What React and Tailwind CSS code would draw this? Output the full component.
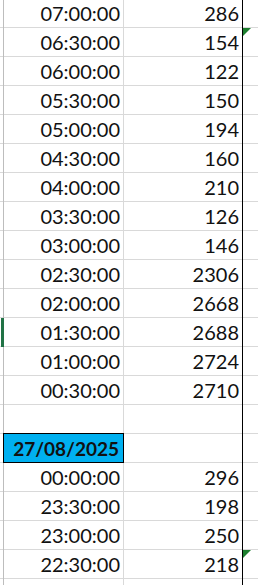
import React from "react";

const rows = [
  ["07:00:00", "286"],
  ["06:30:00", "154", "tri"],
  ["06:00:00", "122"],
  ["05:30:00", "150"],
  ["05:00:00", "194"],
  ["04:30:00", "160"],
  ["04:00:00", "210"],
  ["03:30:00", "126"],
  ["03:00:00", "146"],
  ["02:30:00", "2306"],
  ["02:00:00", "2668"],
  ["01:30:00", "2688", "sel"],
  ["01:00:00", "2724"],
  ["00:30:00", "2710"],
  ["", ""],
  ["27/08/2025", "", "date"],
  ["00:00:00", "296"],
  ["23:30:00", "198"],
  ["23:00:00", "250"],
  ["22:30:00", "218", "tri"],
  ["", ""],
];

function Tri() {
  return (
    <svg width="9" height="9" viewBox="0 0 9 9" className="block">
      <polygon points="0,0 8,0 0,8" fill="#1d7f2f" />
    </svg>
  );
}

export default function App() {
  return (
    <div
      className="w-[258px] h-[585px] overflow-hidden bg-white text-[#111]"
      style={{ fontFamily: "Lato, 'Open Sans', sans-serif" }}
    >
      <div className="flex -mt-px">
        {/* left stub column */}
        <div className="w-[4px] border-r border-[#bdbdbd] flex flex-col">
          {rows.map((r, i) => (
            <div key={i} className="h-[29px] border-b border-[#d9d9d9]">
              {r[2] === "sel" && (
                <div className="ml-px w-[3px] h-[29px] bg-[#217346]" />
              )}
            </div>
          ))}
        </div>
        {/* column A */}
        <div className="w-[120px] border-r border-[#d9d9d9] flex flex-col">
          {rows.map((r, i) =>
            r[2] === "date" ? (
              <div
                key={i}
                className="-mt-px -ml-px w-[121px] h-[30px] border border-black bg-[#00b0f0] flex items-end justify-end pr-[4px] pb-[4px] text-[19px] leading-none font-bold"
              >
                {r[0]}
              </div>
            ) : (
              <div
                key={i}
                className="h-[29px] border-b border-[#d9d9d9] flex items-end justify-end pr-[3px] pb-[4px] text-[20px] leading-none"
              >
                {r[0]}
              </div>
            )
          )}
        </div>
        {/* column B */}
        <div className="w-[119px] border-r border-black flex flex-col">
          {rows.map((r, i) => (
            <div
              key={i}
              className="h-[29px] border-b border-[#d9d9d9] flex items-end justify-end pr-[3px] pb-[4px] text-[20px] leading-none"
            >
              {r[1]}
            </div>
          ))}
        </div>
        {/* column C */}
        <div className="flex-1 flex flex-col">
          {rows.map((r, i) => (
            <div key={i} className="h-[29px] border-b border-[#d9d9d9]">
              {r[2] === "tri" && <Tri />}
            </div>
          ))}
        </div>
      </div>
    </div>
  );
}
